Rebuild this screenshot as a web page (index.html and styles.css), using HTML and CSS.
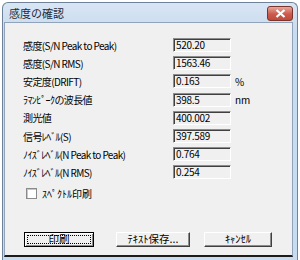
FILE: index.html
```html
<!DOCTYPE html>
<html lang="ja">
  <head>
    <meta charset="UTF-8" />
    <title>感度の確認</title>
    <link rel="stylesheet" href="styles.css">
  </head>
  <body>
    <div class="window">
      <div class="titlebar">
        <span class="title">感度の確認</span>
        <span class="close-btn">
          <svg width="11" height="9" viewBox="0 0 11 9">
            <path d="M1.5 1 L9.5 8 M9.5 1 L1.5 8" stroke="#fff" stroke-width="2.2" />
          </svg>
        </span>
      </div>
      <div class="client">
        <div class="rows">
          <span class="lbl">感度(S/N Peak to Peak)</span>
          <span class="box">520.20</span>
          <span class="unit"></span>

          <span class="lbl">感度(S/N RMS)</span>
          <span class="box">1563.46</span>
          <span class="unit"></span>

          <span class="lbl">安定度(DRIFT)</span>
          <span class="box">0.163</span>
          <span class="unit">%</span>

          <span class="lbl">ﾗﾏﾝﾋﾟｰｸの波長値</span>
          <span class="box">398.5</span>
          <span class="unit">nm</span>

          <span class="lbl">測光値</span>
          <span class="box">400.002</span>
          <span class="unit"></span>

          <span class="lbl">信号ﾚﾍﾞﾙ(S)</span>
          <span class="box">397.589</span>
          <span class="unit"></span>

          <span class="lbl">ﾉｲｽﾞﾚﾍﾞﾙ(N Peak to Peak)</span>
          <span class="box">0.764</span>
          <span class="unit"></span>

          <span class="lbl">ﾉｲｽﾞﾚﾍﾞﾙ(N RMS)</span>
          <span class="box">0.254</span>
          <span class="unit"></span>
        </div>
        <label class="check">
          <span class="check-box"></span>
          <span>ｽﾍﾟｸﾄﾙ印刷</span>
        </label>
        <div class="buttons">
          <button class="btn btn-print default"><span class="focus">印刷</span></button>
          <button class="btn btn-save">ﾃｷｽﾄ保存...</button>
          <button class="btn btn-cancel">ｷｬﾝｾﾙ</button>
        </div>
      </div>
    </div>
  </body>
</html>
```

FILE: styles.css
```css
:root {
  --frame-color: #c9dbee;
  --frame-edge: #6f8299;
  --face-color: #f0f0f0;
  --shadow-color: #8c8c8c;
  --dark-color: #404040;
  --font-family: "Noto Sans CJK JP", "Liberation Sans", sans-serif;
}
* {
  margin: 0;
  padding: 0;
  box-sizing: border-box;
}
body {
  background-color: #fff;
  font-family: var(--font-family);
  font-size: 10px;
  color: #000;
}
.window {
  margin: 2px 2px 0 2px;
  height: 258px;
  display: flex;
  flex-direction: column;
  background: linear-gradient(#d8e5f3, var(--frame-color) 30px);
  border: 1px solid var(--frame-edge);
  border-bottom: none;
  border-radius: 6px 6px 0 0;
  padding: 0 4px 3px 1px;
}
.titlebar {
  height: 19px;
  display: flex;
  align-items: center;
  justify-content: space-between;
  padding-left: 5px;
}
.title {
  font-size: 11px;
  color: #1e2a3a;
}
.close-btn {
  width: 26px;
  height: 15px;
  margin-top: 2px;
  display: flex;
  align-items: center;
  justify-content: center;
  background: linear-gradient(#e8a89c, #cc5a4c 55%, #c04a3c);
  border: 1px solid #7a342c;
  border-radius: 3px;
}
.client {
  flex: 1;
  background-color: var(--face-color);
  border: 1px solid #8fa3bb;
  border-bottom: 2px solid #1c1c1c;
  padding: 13px 0 0 18px;
}
.rows {
  display: grid;
  grid-template-columns: 150px 58px 30px;
  grid-auto-rows: 18.2px;
  align-items: center;
}
.lbl {
  font-size: 10px;
  letter-spacing: -0.6px;
}
.box {
  height: 14px;
  padding-left: 2px;
  line-height: 12px;
  font-size: 10px;
  letter-spacing: -0.3px;
  border-top: 1px solid var(--shadow-color);
  border-left: 1px solid var(--shadow-color);
  border-right: 1px solid #fff;
  border-bottom: 1px solid #fff;
  box-shadow: inset 1px 1px 0 var(--dark-color);
}
.unit {
  padding-left: 4px;
  font-size: 10px;
}
.check {
  display: flex;
  align-items: center;
  gap: 5px;
  margin: 4px 0 0 3px;
  font-size: 10px;
}
.check-box {
  width: 11px;
  height: 11px;
  background-color: #fff;
  border: 1px solid #8a8a8a;
  box-shadow: inset 1px 1px 0 #c8c8c8;
}
.buttons {
  display: flex;
  margin-top: 31px;
  padding-left: 1px;
}
.btn {
  height: 15px;
  font-family: var(--font-family);
  font-size: 10.5px;
  background-color: var(--face-color);
  border-top: 1px solid #fff;
  border-left: 1px solid #fff;
  border-right: 1px solid var(--dark-color);
  border-bottom: 1px solid var(--dark-color);
  box-shadow: inset -1px -1px 0 var(--shadow-color);
  display: flex;
  align-items: center;
  justify-content: center;
  line-height: 1;
}
.btn-print {
  width: 70px;
}
.btn-save {
  width: 74px;
  margin-left: 22px;
}
.btn-cancel {
  width: 68px;
  margin-left: 14px;
}
.btn.default {
  border: 1px solid #000;
  box-shadow: inset 1px 1px 0 #fff, inset -1px -1px 0 var(--shadow-color);
  padding: 2px;
}
.focus {
  width: 100%;
  height: 100%;
  display: flex;
  align-items: center;
  justify-content: center;
  border: 1px dotted #000;
}
```
